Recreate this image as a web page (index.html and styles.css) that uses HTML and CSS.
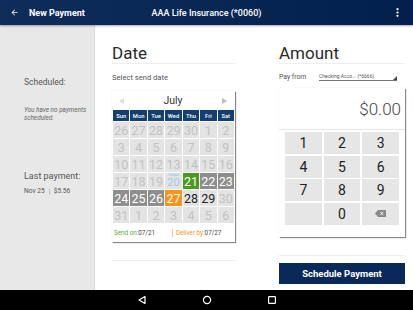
FILE: index.html
```html
<!doctype html>
<html>
<head>
  <meta charset="utf-8">
  <meta name="viewport" content="width=device-width, initial-scale=1">
  <title>New Payment</title>
  <link rel="stylesheet" href="styles.css">
</head>
<body>
<header class="appbar">
  <div class="appbar-left">
    <svg class="back-icon" width="9" height="9" viewBox="0 0 24 24"><path d="M20 11H7.8l5.6-5.6L12 4l-8 8 8 8 1.4-1.4L7.8 13H20z" fill="#fff"/></svg>
    <span class="appbar-title">New Payment</span>
  </div>
  <div class="payee">AAA Life Insurance (*0060)</div>
  <div class="appbar-right">
    <svg width="3" height="9" viewBox="0 0 3 9"><circle cx="1.5" cy="1.2" r="1.1" fill="#fff"/><circle cx="1.5" cy="4.5" r="1.1" fill="#fff"/><circle cx="1.5" cy="7.8" r="1.1" fill="#fff"/></svg>
  </div>
</header>

<div class="main">
  <aside class="sidebar">
    <div class="side-label scheduled">Scheduled:</div>
    <div class="side-note">You have no payments scheduled.</div>
    <div class="side-label last">Last payment:</div>
    <div class="side-last">Nov 25 <span class="pipe"></span> $5.56</div>
  </aside>

  <section class="content">
    <div class="col-date">
      <h2 class="section-title">Date</h2>
      <div class="hint">Select send date</div>

      <div class="calendar">
        <div class="cal-head">
          <span class="cal-arrow prev"></span>
          <span class="cal-month">July</span>
          <span class="cal-arrow next"></span>
        </div>
        <div class="cal-grid" id="calGrid">
          <div class="dow">Sun</div><div class="dow">Mon</div><div class="dow">Tue</div><div class="dow">Wed</div><div class="dow">Thu</div><div class="dow">Fri</div><div class="dow">Sat</div>
        </div>
        <div class="cal-foot">
          <span class="foot-send">Send on:<b>07/21</b></span>
          <span class="foot-deliver">Deliver by:<b>07/27</b></span>
        </div>
      </div>
      <div class="rule"></div>
    </div>

    <div class="col-amount">
      <h2 class="section-title">Amount</h2>
      <div class="pay-from">
        <span class="pay-label">Pay from</span>
        <span class="account">Checking Acco... (*6666)</span>
      </div>

      <div class="amount-panel">
        <div class="amount-display">$0.00</div>
        <div class="keypad">
          <div class="key">1</div><div class="key">2</div><div class="key">3</div>
          <div class="key">4</div><div class="key">5</div><div class="key">6</div>
          <div class="key">7</div><div class="key">8</div><div class="key">9</div>
          <div class="key"></div><div class="key">0</div>
          <div class="key">
            <svg width="11" height="7" viewBox="0 0 11 7"><path d="M3 0h8v7H3L0 3.5z" fill="#888"/><path d="M5.3 1.8l3 3.4M8.3 1.8l-3 3.4" stroke="#eee" stroke-width="1"/></svg>
          </div>
        </div>
      </div>
      <div class="rule"></div>
      <button class="schedule-btn">Schedule Payment</button>
    </div>
  </section>
</div>

<nav class="sysbar">
  <svg width="10" height="10" viewBox="0 0 10 10"><path d="M8 1.5v7L2 5z" fill="none" stroke="#fff" stroke-width="1.2" stroke-linejoin="round"/></svg>
  <svg width="10" height="10" viewBox="0 0 10 10"><circle cx="5" cy="5" r="3.6" fill="none" stroke="#fff" stroke-width="1.2"/></svg>
  <svg width="10" height="10" viewBox="0 0 10 10"><rect x="1.6" y="1.6" width="6.8" height="6.8" rx="0.6" fill="none" stroke="#fff" stroke-width="1.2"/></svg>
</nav>

<script>
  // day cells: [label, kind]
  var days = [
    [26, "off"], [27, "off"], [28, "off"], [29, "off"], [30, "off"], [1, "off"], [2, "off"],
    [3, "off"], [4, "off"], [5, "off"], [6, "off"], [7, "off"], [8, "off"], [9, "off"],
    [10, "off"], [11, "off"], [12, "off"], [13, "off"], [14, "off"], [15, "off"], [16, "off"],
    [17, "off"], [18, "off"], [19, "off"], [20, "today"], [21, "send"], [22, "range"], [23, "range"],
    [24, "range"], [25, "range"], [26, "range"], [27, "deliver"], [28, "open"], [29, "open"], [30, "off"],
    [31, "off"], [1, "off"], [2, "off"], [3, "off"], [4, "off"], [5, "off"], [6, "off"]
  ];
  var grid = document.getElementById("calGrid");
  days.forEach(function (d) {
    var cell = document.createElement("div");
    cell.className = "day " + d[1];
    if (d[1] === "today") {
      cell.innerHTML = '<span class="today-tag">TODAY</span><span class="today-num">' + d[0] + '</span>';
    } else {
      cell.innerText = d[0];
    }
    grid.appendChild(cell);
  });
</script>
</body>
</html>
```

FILE: styles.css
```css
body {
  margin: 0;
  width: 413px;
  height: 310px;
  overflow: hidden;
  font-family: Roboto, "Liberation Sans", sans-serif;
  display: flex;
  flex-direction: column;
  background-color: #fff;
}

.appbar {
  height: 25px;
  flex: none;
  display: grid;
  grid-template-columns: 1fr auto 1fr;
  align-items: center;
  background: linear-gradient(90deg, #0f2d59, #03204d);
  color: #fff;
  box-shadow: 0 1px 2px rgba(0, 0, 0, 0.35);
  position: relative;
  z-index: 1;
}

.appbar-left {
  display: flex;
  align-items: center;
  padding-left: 10px;
}

.back-icon {
  margin-right: 10px;
}

.appbar-title {
  font-size: 9px;
  font-weight: bold;
}

.payee {
  font-size: 9px;
  font-weight: 500;
}

.appbar-right {
  display: flex;
  justify-content: flex-end;
  padding-right: 14px;
}

.main {
  flex: 1;
  display: flex;
  min-height: 0;
}

.sidebar {
  width: 70px;
  flex: none;
  background-color: #e8e8e8;
  border-right: 1px solid #d9d9d9;
  padding-left: 24px;
  color: #555;
}

.side-label {
  font-size: 8.5px;
  line-height: 11px;
}

.side-label.scheduled {
  margin-top: 52px;
}

.side-note {
  margin-top: 18px;
  font-size: 6.4px;
  line-height: 8px;
  font-style: italic;
  color: #666;
  width: 66px;
}

.side-label.last {
  margin-top: 49px;
  font-size: 9px;
}

.side-last {
  margin-top: 5px;
  font-size: 6.6px;
  line-height: 9px;
  color: #555;
  display: flex;
  align-items: center;
}

.side-last .pipe {
  width: 1px;
  height: 6px;
  background-color: #bbb;
  margin: 0 4px;
}

.content {
  flex: 1;
  display: flex;
  padding-left: 17px;
  gap: 44px;
}

.col-date {
  width: 123px;
}

.col-amount {
  width: 126px;
}

.section-title {
  margin: 18px 0 0;
  font-size: 17px;
  line-height: 20px;
  font-weight: normal;
  color: #2a2a2a;
  border-bottom: 1px solid #eee;
}

.hint {
  margin-top: 9px;
  font-size: 7.6px;
  line-height: 10px;
  color: #555;
}

.calendar {
  margin-top: 8px;
  background-color: #fff;
  box-shadow: 1px 1px 1px rgba(0, 0, 0, 0.45), 0 0 1px rgba(0, 0, 0, 0.12);
}

.cal-head {
  height: 19px;
  display: flex;
  align-items: center;
  justify-content: space-between;
  padding: 0 8px 0 7px;
}

.cal-month {
  font-size: 10.5px;
  color: #333;
}

.cal-arrow {
  width: 0;
  height: 0;
  border-top: 3px solid transparent;
  border-bottom: 3px solid transparent;
}

.cal-arrow.prev {
  border-right: 5px solid #ddd;
}

.cal-arrow.next {
  border-left: 5px solid #bbb;
}

.cal-grid {
  display: grid;
  grid-template-columns: repeat(7, minmax(0, 1fr));
  gap: 1px;
  padding: 0 1px;
}

.dow {
  height: 11px;
  background-color: #123f70;
  color: #fff;
  font-size: 5.8px;
  font-weight: 500;
  display: flex;
  align-items: center;
  justify-content: center;
}

.day {
  height: 16px;
  background-color: #e3e3e3;
  color: #c2c2c2;
  font-size: 12.5px;
  display: flex;
  align-items: center;
  justify-content: center;
}

.day.today {
  flex-direction: column;
  justify-content: flex-start;
  color: #9cc9e8;
}

.today-tag {
  font-size: 3.5px;
  line-height: 4px;
  color: #8fc1e6;
}

.today-num {
  font-size: 11px;
  line-height: 11px;
}

.day.send {
  background-color: #4a9a1f;
  color: #fff;
}

.day.range {
  background-color: #8e8e8e;
  color: #fff;
}

.day.deliver {
  background-color: #f7941d;
  color: #fff;
}

.day.open {
  color: #222;
}

.cal-foot {
  height: 19px;
  display: flex;
  align-items: center;
  padding: 0 2px;
  font-size: 6.3px;
}

.cal-foot b {
  font-weight: normal;
  color: #444;
}

.foot-send {
  color: #62a83a;
  width: 58px;
}

.foot-deliver {
  color: #f7941d;
  border-left: 1px solid #f3c68e;
  padding-left: 3px;
}

.rule {
  margin-top: 18px;
  border-top: 1px solid #eee;
}

.pay-from {
  margin-top: 7px;
  height: 11px;
  display: flex;
  align-items: center;
}

.pay-label {
  font-size: 6.8px;
  color: #555;
  width: 40px;
}

.account {
  font-size: 5px;
  color: #555;
  border-bottom: 1px solid #777;
  width: 78px;
  padding-bottom: 1px;
  position: relative;
}

.account::after {
  content: "";
  position: absolute;
  right: 0;
  bottom: 0;
  border-left: 4px solid transparent;
  border-bottom: 4px solid #444;
}

.amount-panel {
  margin-top: 6px;
  background-color: #fff;
  box-shadow: 1px 1px 1px rgba(0, 0, 0, 0.45), 0 0 1px rgba(0, 0, 0, 0.12);
}

.amount-display {
  height: 41px;
  border-bottom: 1px solid #e4e4e4;
  display: flex;
  align-items: center;
  justify-content: flex-end;
  padding-right: 4px;
  font-size: 17px;
  font-weight: 300;
  color: #444;
}

.keypad {
  display: grid;
  grid-template-columns: repeat(3, 1fr);
  gap: 1.5px 2px;
  padding: 2px 6px 12px 6px;
}

.key {
  height: 22px;
  background-color: #e6e6e6;
  display: flex;
  align-items: center;
  justify-content: center;
  font-size: 14px;
  color: #222;
}

.schedule-btn {
  margin-top: 7px;
  width: 100%;
  height: 21px;
  border: none;
  background-color: #08295a;
  color: #fff;
  font-family: Roboto, "Liberation Sans", sans-serif;
  font-size: 9.5px;
  font-weight: bold;
  padding: 0;
}

.sysbar {
  height: 20px;
  flex: none;
  background-color: #000;
  display: flex;
  align-items: center;
  justify-content: center;
  gap: 55px;
}
```
